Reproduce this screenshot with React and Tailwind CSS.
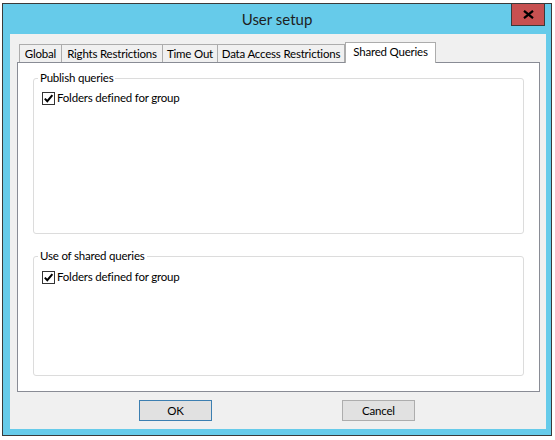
import React from "react";

const font = { fontFamily: "Lato, 'Liberation Sans', sans-serif" };

function Tab({ label, width, selected, last }) {
  if (selected) {
    return (
      <div
        className="relative z-10 shrink-0 whitespace-nowrap h-[21px] border border-b-0 border-[#acacac] bg-white flex justify-center pt-[1px] text-[11.5px] tracking-[-0.2px] leading-[16px] text-black"
        style={{ width }}
      >
        {label}
      </div>
    );
  }
  return (
    <div
      className={
        "shrink-0 whitespace-nowrap h-[18px] mb-[1px] border-t border-l border-[#acacac] bg-[#f0f0f0] flex justify-center pt-[1px] text-[11.5px] tracking-[-0.2px] leading-[16px] text-black" +
        (last ? " border-r" : "")
      }
      style={{ width }}
    >
      {label}
    </div>
  );
}

function CheckBox({ label, top }) {
  return (
    <div className="flex items-center gap-[2px]" style={{ marginTop: top }}>
      <div className="w-[13px] h-[13px] border border-[#333333] bg-white flex items-center justify-center">
        <svg width="11" height="11" viewBox="0 0 11 11">
          <path d="M1.8 5.6 L4.3 8.2 L9.4 2.2" fill="none" stroke="#000" strokeWidth="2" />
        </svg>
      </div>
      <span className="text-[11.5px] tracking-[-0.2px] leading-[16px] text-black">{label}</span>
    </div>
  );
}

function GroupBox({ title, height, top }) {
  return (
    <fieldset
      className="border border-[#dcdcdc] rounded-[3px] px-[8px] w-full"
      style={{ height }}
    >
      <legend className="ml-[-4px] px-[2px] text-[11.5px] tracking-[-0.2px] leading-[16px] text-black">{title}</legend>
      <CheckBox label="Folders defined for group" top={top} />
    </fieldset>
  );
}

export default function App() {
  return (
    <div className="w-[555px] h-[440px] bg-white pt-[3px] pl-[2px]" style={font}>
      <div className="w-[550px] h-[433px] border border-[#3a3a3a] bg-[#66cbea] flex flex-col">
        {/* Title bar */}
        <div className="relative h-[30px] flex items-center justify-center">
          <span className="text-[15px] text-[#1e1e1e] mt-[1px]">User setup</span>
          <div className="absolute right-[6px] top-0 w-[34px] h-[22px] bg-[#c75050] border border-t-0 border-[#3a3a3a] flex items-center justify-center">
            <svg width="11" height="9" viewBox="0 0 11 9">
              <path d="M1 0.8 L10 8.2 M10 0.8 L1 8.2" stroke="#000" strokeWidth="2.2" />
            </svg>
          </div>
        </div>

        {/* Client area */}
        <div className="ml-[7px] w-[536px] h-[395px] bg-[#f0f0f0] flex flex-col pt-[8px] px-[7px]">
          <div className="flex items-end h-[21px] pl-[2px]">
            <Tab label="Global" width={42} />
            <Tab label="Rights Restrictions" width={101} />
            <Tab label="Time Out" width={55} />
            <Tab label="Data Access Restrictions" width={128} last />
            <Tab label="Shared Queries" width={91} selected />
          </div>

          <div className="mt-[-1px] w-[523px] h-[330px] border border-[#898c95] bg-white flex flex-col gap-[14px] pt-[7px] px-[15px]">
            <GroupBox title="Publish queries" height={164} top={4} />
            <GroupBox title="Use of shared queries" height={128} top={5} />
          </div>

          <div className="flex mt-[8px]">
            <button className="ml-[122px] w-[73px] h-[21px] border border-[#3c7fb1] bg-[#e1e1e1] text-[11.5px] tracking-[-0.2px] text-black leading-[16px]">
              OK
            </button>
            <button className="ml-[130px] w-[73px] h-[21px] border border-[#adadad] bg-[#e1e1e1] text-[11.5px] tracking-[-0.2px] text-black leading-[16px]">
              Cancel
            </button>
          </div>
        </div>
      </div>
    </div>
  );
}
